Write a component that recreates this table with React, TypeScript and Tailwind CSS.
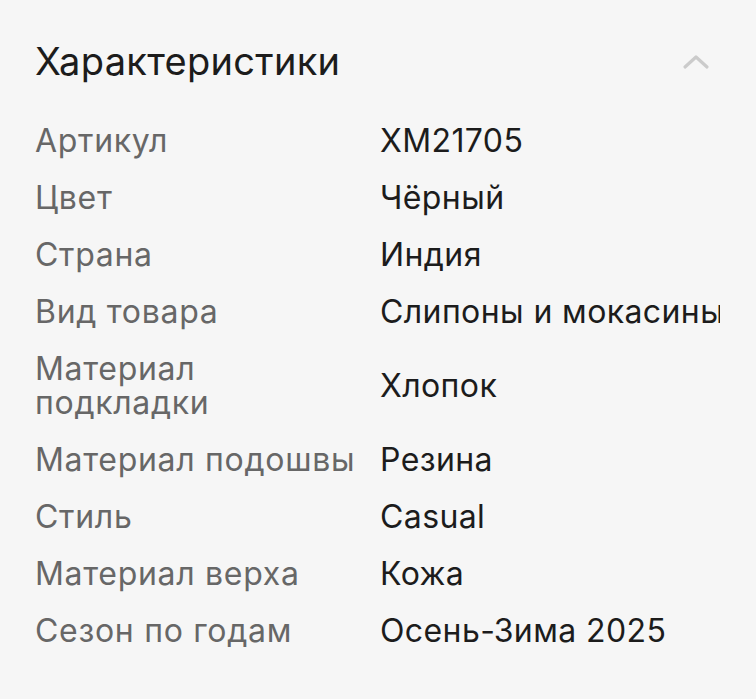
const rows: [string, string][] = [
  ["Артикул", "XM21705"],
  ["Цвет", "Чёрный"],
  ["Страна", "Индия"],
  ["Вид товара", "Слипоны и мокасины"],
  ["Материал подкладки", "Хлопок"],
  ["Материал подошвы", "Резина"],
  ["Стиль", "Casual"],
  ["Материал верха", "Кожа"],
  ["Сезон по годам", "Осень-Зима 2025"],
];

export default function App() {
  return (
    <div className="w-[756px] h-[699px] bg-[#f6f6f6] font-['Inter',sans-serif] overflow-hidden">
      <div className="pl-[35px] pr-[36px] pt-[37px]">
        <div className="flex items-center justify-between h-[48px]">
          <h2 className="text-[38px] leading-[48px] text-[#1c1c1c] tracking-[0.3px]">Характеристики</h2>
          <svg width="28" height="18" viewBox="0 0 28 18" className="mr-[10px]" fill="none">
            <polyline points="3,15 14,5 25,15" stroke="#cbcbcb" strokeWidth="3.2" strokeLinecap="round" strokeLinejoin="round" />
          </svg>
        </div>
        <div className="mt-[31px] py-[8px] flex flex-col gap-[23px] overflow-x-clip">
          {rows.map(([k, v]) => (
            <div key={k} className="flex items-center">
              <div className="w-[345px] shrink-0 text-[32px] leading-[34px] text-[#676767] tracking-[0.7px] pr-4">{k}</div>
              <div className="shrink-0 text-[32px] leading-[34px] text-[#1c1c1c] tracking-[0.4px] whitespace-nowrap">{v}</div>
            </div>
          ))}
        </div>
      </div>
    </div>
  );
}
